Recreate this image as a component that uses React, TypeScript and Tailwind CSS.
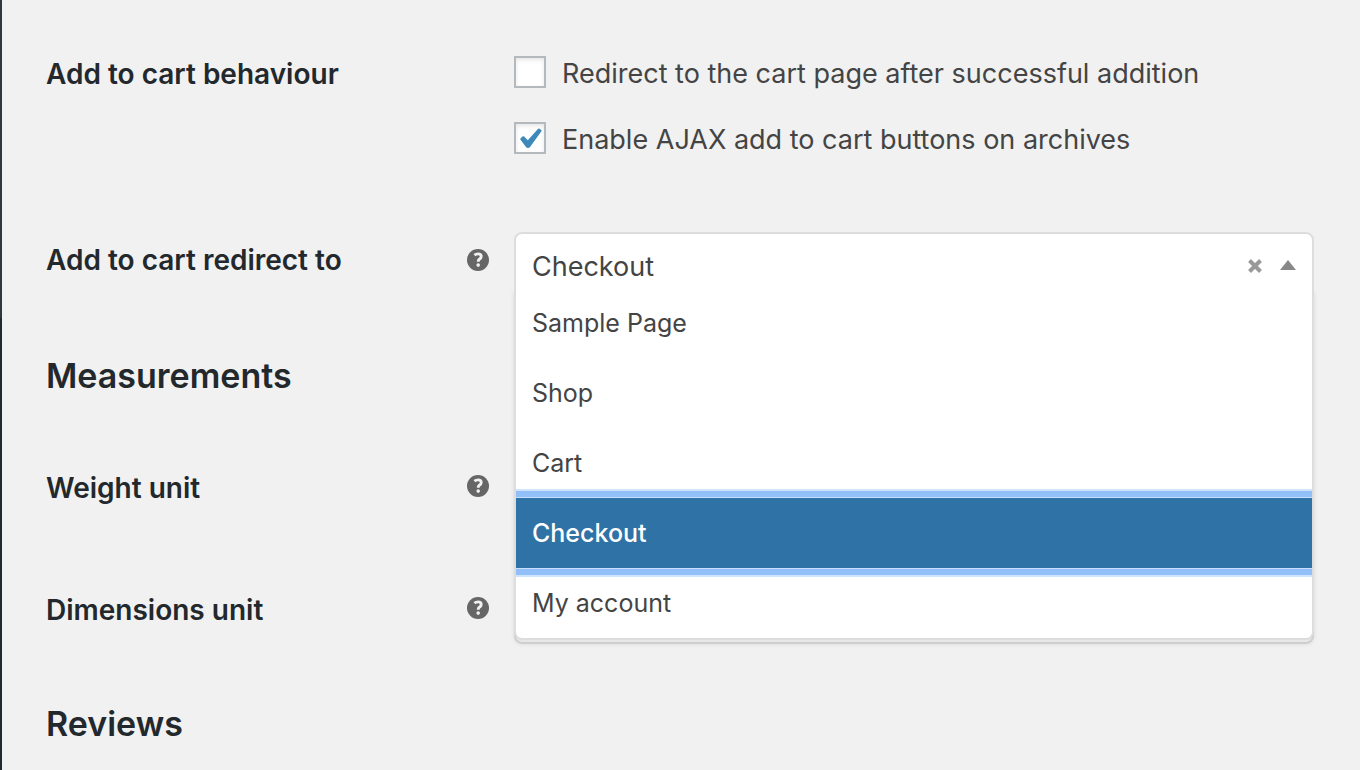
import { useState } from "react";

const pages = ["Sample Page", "Shop", "Cart", "Checkout", "My account"];

const rowClass = "grid grid-cols-[421px_47px_minmax(0,1fr)]";
const labelClass = "text-[28px] leading-8 font-semibold text-[#23282d]";
const headingClass = "text-[34px] leading-10 font-semibold text-[#23282d]";

function HelpTip() {
  return (
    <svg viewBox="0 0 22 22" className="block h-[22px] w-[22px]" role="img" aria-label="Help">
      <circle cx="11" cy="11" r="11" fill="#666" />
      <path
        d="M7.400 6.200C8.500 5.300 9.900 4.900 11.100 4.900c1.900 0 3.100 1 3.100 2.500 0 1.200-.6 1.900-1.600 2.600-.9.600-1.300 1-1.300 1.900v.8"
        fill="none"
        stroke="#f1f1f1"
        strokeWidth="2.900"
      />
      <circle cx="11.200" cy="16.100" r="1.800" fill="#f1f1f1" />
    </svg>
  );
}

function Check({ label, initial }: { label: string; initial: boolean }) {
  const [on, setOn] = useState(initial);
  return (
    <label className="flex items-start gap-4 text-[27px] leading-9 text-[#444]">
      <span className="grid h-8 w-8 shrink-0">
        <input
          type="checkbox"
          checked={on}
          onChange={(e) => setOn(e.target.checked)}
          className="col-start-1 row-start-1 h-8 w-8 appearance-none border-2 border-[#b4b9be] bg-white shadow-[inset_0_2px_4px_rgba(0,0,0,0.1)]"
        />
        {on && (
          <svg viewBox="0 0 32 32" className="pointer-events-none col-start-1 row-start-1 h-8 w-8">
            <path
              d="M6.600 16.200L8.800 14.300Q9.500 13.900 10.100 14.500L13.800 18.300L23.900 6.900Q24.800 6.100 25.600 6.700L27.300 8.100Q27.900 8.700 27.300 9.500L16 25Q15.300 26 14 26Q12.700 26 12 25L6.500 17.800Q6 16.900 6.600 16.200Z"
              fill="#3e89bb"
            />
          </svg>
        )}
      </span>
      {label}
    </label>
  );
}

function PageSelect() {
  return (
    <div className="relative">
      <div className="flex h-[66px] items-center rounded-lg border-2 border-[#ddd] bg-white px-4">
        <button
          type="button"
          role="combobox"
          aria-expanded="true"
          aria-controls="pages"
          aria-labelledby="redirect-label"
          className="flex-1 pt-[3px] text-left text-[27px] leading-8 text-[#444]"
        >
          Checkout
        </button>
        <button type="button" aria-label="Clear" className="mr-[17px]">
          <svg viewBox="0 0 16 16" className="block h-4 w-4">
            <path d="M2.500 3.500L13.500 14.500M13.500 3.500L2.500 14.500" stroke="#999" strokeWidth="4" />
          </svg>
        </button>
        <svg viewBox="0 0 16 10" className="block h-[10px] w-4">
          <path d="M0 10L8 0L16 10Z" fill="#888" />
        </svg>
      </div>
      <ul
        id="pages"
        role="listbox"
        aria-labelledby="redirect-label"
        className="absolute inset-x-0 top-14 z-10 overflow-hidden rounded-b-lg border-x-2 border-b-2 border-[#ddd] bg-white shadow-[0_4px_4px_rgba(0,0,0,0.1)]"
      >
        {pages.map((page) => (
          <li
            key={page}
            role="option"
            aria-selected={page === "Checkout"}
            className={
              page === "Checkout"
                ? "relative flex h-[70px] items-center bg-[#2e72a6] px-4 text-[25px] leading-8 font-medium text-white shadow-[0_0_0_1px_#c7dffc,0_0_0_7px_#93bff9,0_0_0_9px_#d0e3fc]"
                : "flex h-[70px] items-center px-4 text-[25px] leading-8 text-[#444]"
            }
          >
            {page}
          </li>
        ))}
      </ul>
    </div>
  );
}

function UnitRow({ id, label }: { id: string; label: string }) {
  return (
    <div className={rowClass}>
      <label htmlFor={id} className={`${labelClass} pt-4`}>
        {label}
      </label>
      <div className="pt-[19px]">
        <HelpTip />
      </div>
      <select id={id} className="h-[66px] w-full appearance-none rounded-lg border-2 border-[#ddd] bg-white" />
    </div>
  );
}

export default function App() {
  return (
    <div className="flex min-h-screen bg-[#f1f1f1] font-['Inter','Liberation_Sans',sans-serif]">
      <aside className="flex w-[2px] shrink-0 flex-col bg-[#23282d]">
        <div className="h-[318px] bg-[#32373c]" />
      </aside>
      <main className="min-w-0 flex-1 pt-14 pr-[46px] pl-11">
        <div className={rowClass}>
          <h3 className={`${labelClass} col-span-2 pt-[2px]`}>Add to cart behaviour</h3>
          <div className="flex flex-col gap-[30px]">
            <Check label="Redirect to the cart page after successful addition" initial={false} />
            <Check label="Enable AJAX add to cart buttons on archives" initial={true} />
          </div>
        </div>
        <div className={`${rowClass} mt-[74px]`}>
          <h3 id="redirect-label" className={`${labelClass} pt-3`}>
            Add to cart redirect to
          </h3>
          <div className="pt-[17px]">
            <HelpTip />
          </div>
          <PageSelect />
        </div>
        <h2 className={`${headingClass} mt-[58px]`}>Measurements</h2>
        <div className="mt-[60px] flex flex-col gap-14">
          <UnitRow id="weight" label="Weight unit" />
          <UnitRow id="dimensions" label="Dimensions unit" />
        </div>
        <h2 className={`${headingClass} mt-[60px]`}>Reviews</h2>
      </main>
    </div>
  );
}
